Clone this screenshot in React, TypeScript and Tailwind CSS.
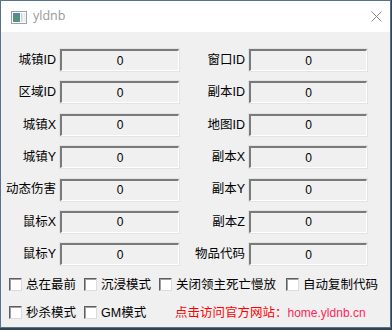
import React from "react";

const font = { fontFamily: '"Liberation Sans", "Noto Sans CJK SC", sans-serif' };

function Field({ label, labelW, inputW }: { label: string; labelW: string; inputW: string }) {
  return (
    <div className="flex items-center h-[22px]">
      <div className={`${labelW} text-right text-[12.5px] text-black pr-[4px] leading-none whitespace-nowrap`}>{label}</div>
      <div
        className={`${inputW} h-[22px] flex items-center justify-center text-[12px] text-black bg-[#f0f0f0] border-t-2 border-l-2 border-b border-r border-t-[#7a7a7a] border-l-[#7a7a7a] border-b-white border-r-white shadow-[0_0_0_1px_#e3e3e3]`}
      >
        0
      </div>
    </div>
  );
}

function Check({ label }: { label: React.ReactNode }) {
  return (
    <div className="flex items-center gap-[4px] whitespace-nowrap">
      <div className="w-[13px] h-[13px] bg-white border border-[#5e5e5e] border-r-[#dcdcdc] border-b-[#dcdcdc] shadow-[inset_1px_1px_0_#a0a0a0]" />
      <span className="text-[12.5px] text-black leading-none">{label}</span>
    </div>
  );
}

const left = ["城镇ID", "区域ID", "城镇X", "城镇Y", "动态伤害", "鼠标X", "鼠标Y"];
const right = ["窗口ID", "副本ID", "地图ID", "副本X", "副本Y", "副本Z", "物品代码"];

export default function App() {
  return (
    <div className="w-[392px] h-[330px] bg-[#33434f] overflow-hidden" style={font}>
      <div className="w-[391px] h-[328px] border border-[#56728c] bg-[#f0f0f0] flex flex-col">
        <div className="h-[31px] bg-white flex items-center shrink-0 relative">
          <svg className="ml-[10px] mt-[1px]" width="16" height="13" viewBox="0 0 16 13">
            <defs>
              <linearGradient id="g" x1="0" y1="0" x2="0" y2="1">
                <stop offset="0" stopColor="#5e86a8" />
                <stop offset="1" stopColor="#4f9a6a" />
              </linearGradient>
            </defs>
            <rect x="0.5" y="0.5" width="15" height="12" fill="#ffffff" stroke="#9aa3ab" />
            <rect x="2" y="2" width="7" height="9" fill="url(#g)" />
            <rect x="10" y="2" width="1.5" height="9" fill="#c9d4dc" />
            <rect x="12.5" y="2" width="2" height="9" fill="#e4ebef" />
          </svg>
          <span className="ml-[6px] text-[12.5px] text-[#999999]" style={{ fontFamily: '"Open Sans", "Noto Sans", sans-serif' }}>
            yldnb
          </span>
          <svg className="absolute left-[370px] top-[10px]" width="11" height="11" viewBox="0 0 11 11">
            <path d="M0.5 0.5 L10.5 10.5 M10.5 0.5 L0.5 10.5" stroke="#8a8a8a" strokeWidth="1" />
          </svg>
        </div>
        <div className="flex flex-col pt-[17px] gap-[10.4px]">
          {left.map((l, i) => (
            <div key={i} className="flex">
              <Field label={l} labelW="w-[59px]" inputW="w-[119px]" />
              <Field label={right[i]} labelW="w-[70px]" inputW="w-[118px]" />
            </div>
          ))}
        </div>
        <div className="flex flex-col mt-[13px] gap-[15px] pl-[8px]">
          <div className="flex">
            <div className="w-[75px]"><Check label="总在最前" /></div>
            <div className="w-[75px]"><Check label="沉浸模式" /></div>
            <div className="w-[127px]"><Check label="关闭领主死亡慢放" /></div>
            <div><Check label="自动复制代码" /></div>
          </div>
          <div className="flex items-center">
            <div className="w-[75px]"><Check label="秒杀模式" /></div>
            <div className="w-[91px]"><Check label="GM模式" /></div>
            <span className="text-[12.5px] leading-none text-[#ff0000] whitespace-nowrap">
              点击访问官方网站：
              <span className="text-[#ff1f5a] text-[12px]" style={{ fontFamily: '"Liberation Sans", sans-serif' }}>home.yldnb.cn</span>
            </span>
          </div>
        </div>
      </div>
    </div>
  );
}
